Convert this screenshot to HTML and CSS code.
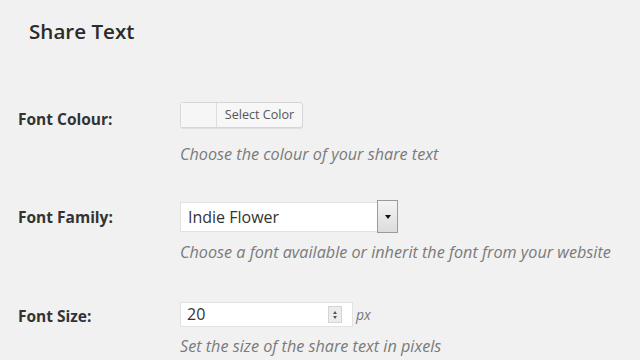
FILE: index.html
```html
<!DOCTYPE html>
<html lang="en">
<head>
    <meta charset="UTF-8">
    <meta name="viewport" content="width=device-width, initial-scale=1.0">
    <title>Share Text Settings</title>
    <link rel="stylesheet" href="styles.css">
</head>
<body>

    <div class="settings">
        <h2>Share Text</h2>

        <div class="row row-colour">
            <div class="label">Font Colour:</div>
            <div class="field">
                <div class="color-picker">
                    <span class="swatch"></span>
                    <span class="picker-text">Select Color</span>
                </div>
                <p class="desc">Choose the colour of your share text</p>
            </div>
        </div>

        <div class="row row-family">
            <div class="label">Font Family:</div>
            <div class="field">
                <div class="select">
                    <span class="select-value">Indie Flower</span>
                    <span class="select-arrow"><span class="tri"></span></span>
                </div>
                <p class="desc">Choose a font available or inherit the font from your website</p>
            </div>
        </div>

        <div class="row row-size">
            <div class="label">Font Size:</div>
            <div class="field">
                <div class="size-line">
                    <div class="number">
                        <span class="number-value">20</span>
                        <span class="spinner">
                            <span class="up"></span>
                            <span class="down"></span>
                        </span>
                    </div>
                    <span class="unit">px</span>
                </div>
                <p class="desc">Set the size of the share text in pixels</p>
            </div>
        </div>
    </div>

</body>
</html>
```

FILE: styles.css
```css
body {
    font-family: "Open Sans", Arial, sans-serif;
    margin: 0;
    padding: 0;
    background-color: #f1f1f1;
    color: #333;
}
.settings {
    padding: 17px 0 0 18px;
}
.settings h2 {
    margin: 0 0 57px 11px;
    font-size: 20.6px;
    font-weight: 600;
    line-height: 28px;
    color: #2b2b2b;
}
.row {
    display: flex;
}
.label {
    width: 162px;
    flex-shrink: 0;
    font-size: 15.5px;
    font-weight: 700;
    line-height: 20px;
    color: #333;
}
.row-colour .label,
.row-family .label {
    padding-top: 7px;
}
.row-size .label {
    padding-top: 4px;
}
.row-family {
    margin-top: 36px;
}
.row-size {
    margin-top: 40px;
}
.desc {
    margin: 9px 0 0;
    font-size: 16.2px;
    font-style: italic;
    line-height: 20px;
    color: #7a7a7a;
}
.row-colour .desc {
    margin-top: 16px;
}

/* colour picker */
.color-picker {
    display: flex;
    width: 121px;
    height: 24px;
    border: 1px solid #d6d6d6;
    border-radius: 3px;
    background-color: #f7f7f7;
    box-shadow: 0 1px 0 #e0e0e0;
}
.swatch {
    width: 35px;
    border-right: 1px solid #dcdcdc;
    background-color: #f6f6f6;
}
.picker-text {
    flex: 1;
    font-size: 12.6px;
    line-height: 24px;
    text-align: center;
    color: #555;
}

/* select */
.select {
    display: flex;
    width: 218px;
    height: 33px;
}
.select-value {
    flex: 1;
    margin-top: 2px;
    height: 28px;
    padding-left: 7px;
    border: 1px solid #e2e2e2;
    border-right: none;
    background-color: #fff;
    font-size: 16px;
    line-height: 28px;
    color: #333;
}
.select-arrow {
    width: 19px;
    display: flex;
    align-items: center;
    justify-content: center;
    border: 1px solid #9a9a9a;
    background: linear-gradient(#f4f4f4, #dcdcdc);
}
.tri {
    width: 0;
    height: 0;
    border-left: 3px solid transparent;
    border-right: 3px solid transparent;
    border-top: 4px solid #111;
}

/* number input */
.size-line {
    display: flex;
    align-items: center;
}
.number {
    display: flex;
    align-items: center;
    width: 173px;
    height: 25px;
    border: 1px solid #e2e2e2;
    background-color: #fff;
    box-sizing: border-box;
}
.number-value {
    flex: 1;
    padding-left: 6px;
    font-size: 16px;
    line-height: 23px;
    color: #333;
}
.spinner {
    display: flex;
    flex-direction: column;
    align-items: center;
    justify-content: center;
    gap: 2px;
    width: 12px;
    height: 15px;
    margin-right: 10px;
    border: 1px solid #d4d4d4;
    background-color: #ececec;
}
.up {
    border-left: 2px solid transparent;
    border-right: 2px solid transparent;
    border-bottom: 3px solid #555;
}
.down {
    border-left: 2px solid transparent;
    border-right: 2px solid transparent;
    border-top: 3px solid #555;
}
.unit {
    margin-left: 3px;
    font-size: 14px;
    font-style: italic;
    color: #777;
}
```
